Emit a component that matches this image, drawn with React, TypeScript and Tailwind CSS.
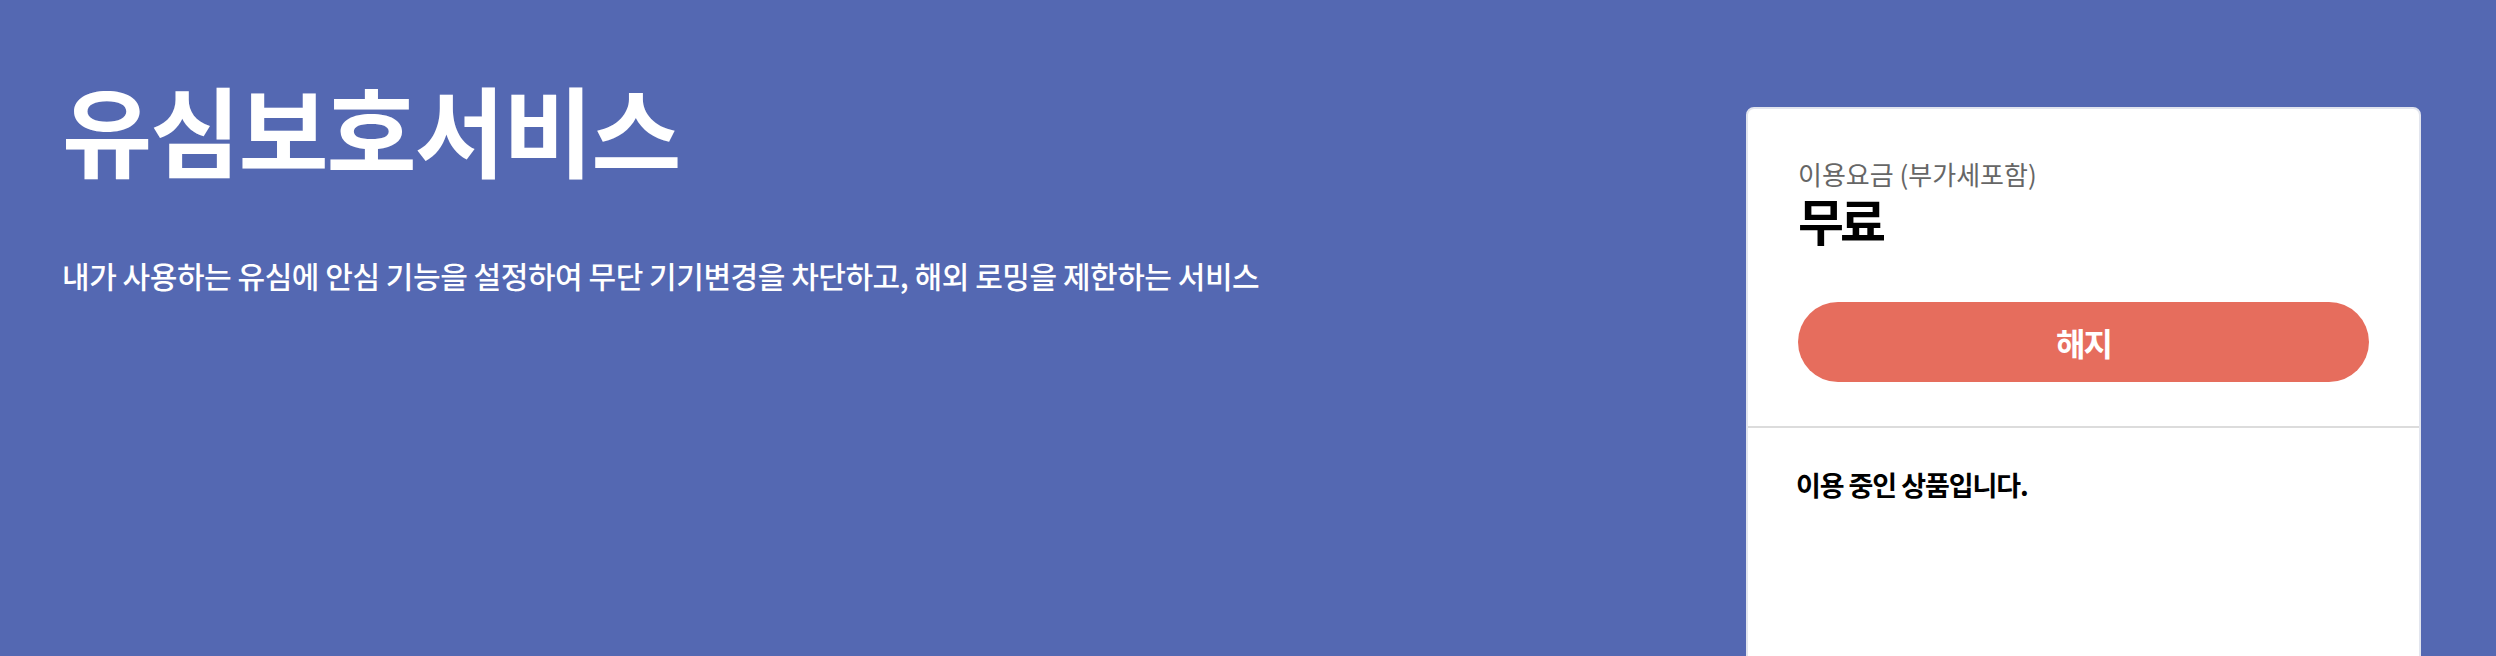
import React from "react";

export default function App() {
  return (
    <div
      className="w-full h-[656px] bg-[#5468b2] flex overflow-hidden"
      style={{ fontFamily: '"Noto Sans CJK KR", "Noto Sans", sans-serif' }}
    >
      <div className="flex-1 pl-[62px] pt-[78px]">
        <h1 className="text-[98px] font-bold leading-none tracking-[-0.02em] text-white">
          유심보호서비스
        </h1>
        <p className="mt-[84px] text-[30px] font-medium leading-none tracking-[-0.015em] text-white">
          내가 사용하는 유심에 안심 기능을 설정하여 무단 기기변경을 차단하고, 해외 로밍을 제한하는 서비스
        </p>
      </div>
      <div className="mt-[107px] mr-[75px] w-[675px] h-[620px] shrink-0 bg-white border-2 border-[#e2e5ee] rounded-[8px] flex flex-col">
        <div className="px-[50px] pt-[49px] pb-[44px]">
          <div className="text-[26px] leading-[1.2] tracking-normal text-[#666666]">
            이용요금 (부가세포함)
          </div>
          <div className="mt-[3px] text-[50px] font-bold leading-[1.1] tracking-[-0.08em] text-black">
            무료
          </div>
          <button className="mt-[55px] w-full h-[80px] rounded-full bg-[#e66d5d] text-white text-[32px] font-bold tracking-[-0.06em] flex items-center justify-center">
            해지
          </button>
        </div>
        <div className="h-[2px] bg-[#dcdcdc]" />
        <div className="pl-[48px] pr-[50px] pt-[43px]">
          <div className="text-[27px] font-bold leading-none tracking-[-0.04em] text-black">
            이용 중인 상품입니다.
          </div>
        </div>
      </div>
    </div>
  );
}
